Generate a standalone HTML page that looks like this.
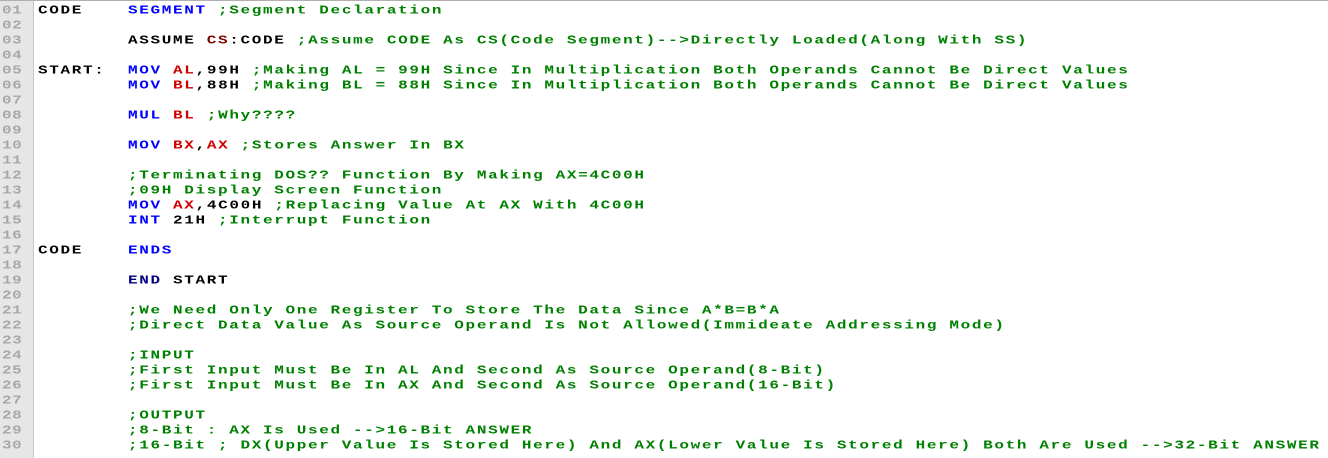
<!DOCTYPE html>
<html><head><meta charset="utf-8"><style>
html,body{margin:0;padding:0;background:#fff;width:1328px;height:458px;overflow:hidden}
.g{position:absolute;left:0;top:0;width:33px;height:458px;background:#e6e6e6;border-right:1px solid #c8c8c8}
.top{position:absolute;left:0;top:0;width:1328px;height:1px;background:#b0b0b0}
pre{position:absolute;margin:0;top:3px;font-family:"Liberation Mono",monospace;font-weight:bold;font-size:16px;line-height:20px;letter-spacing:1.65px;color:#000;transform:scaleY(0.75);transform-origin:0 0}
.n{left:2px;color:#a8a8a8;letter-spacing:0.5px}
.c{left:38px}
.k{color:#0000ff}.r{color:#d00000}.d{color:#800000}.m{color:#008000}.e{color:#000080}
</style></head><body>
<div class="g"></div><div class="top"></div>
<pre class="n">01
02
03
04
05
06
07
08
09
10
11
12
13
14
15
16
17
18
19
20
21
22
23
24
25
26
27
28
29
30</pre>
<pre class="c">CODE    <span class="k">SEGMENT</span> <span class="m">;Segment Declaration</span>

        ASSUME <span class="d">CS</span>:CODE <span class="m">;Assume CODE As CS(Code Segment)--&gt;Directly Loaded(Along With SS)</span>

START:  <span class="k">MOV</span> <span class="r">AL</span>,99H <span class="m">;Making AL = 99H Since In Multiplication Both Operands Cannot Be Direct Values</span>
        <span class="k">MOV</span> <span class="r">BL</span>,88H <span class="m">;Making BL = 88H Since In Multiplication Both Operands Cannot Be Direct Values</span>

        <span class="k">MUL</span> <span class="r">BL</span> <span class="m">;Why????</span>

        <span class="k">MOV</span> <span class="r">BX</span>,<span class="r">AX</span> <span class="m">;Stores Answer In BX</span>

        <span class="m">;Terminating DOS?? Function By Making AX=4C00H</span>
        <span class="m">;09H Display Screen Function</span>
        <span class="k">MOV</span> <span class="r">AX</span>,4C00H <span class="m">;Replacing Value At AX With 4C00H</span>
        <span class="k">INT</span> 21H <span class="m">;Interrupt Function</span>

CODE    <span class="k">ENDS</span>

        <span class="e">END</span> START

        <span class="m">;We Need Only One Register To Store The Data Since A*B=B*A</span>
        <span class="m">;Direct Data Value As Source Operand Is Not Allowed(Immideate Addressing Mode)</span>

        <span class="m">;INPUT</span>
        <span class="m">;First Input Must Be In AL And Second As Source Operand(8-Bit)</span>
        <span class="m">;First Input Must Be In AX And Second As Source Operand(16-Bit)</span>

        <span class="m">;OUTPUT</span>
        <span class="m">;8-Bit : AX Is Used --&gt;16-Bit ANSWER</span>
        <span class="m">;16-Bit ; DX(Upper Value Is Stored Here) And AX(Lower Value Is Stored Here) Both Are Used --&gt;32-Bit ANSWER</span></pre>
</body></html>
